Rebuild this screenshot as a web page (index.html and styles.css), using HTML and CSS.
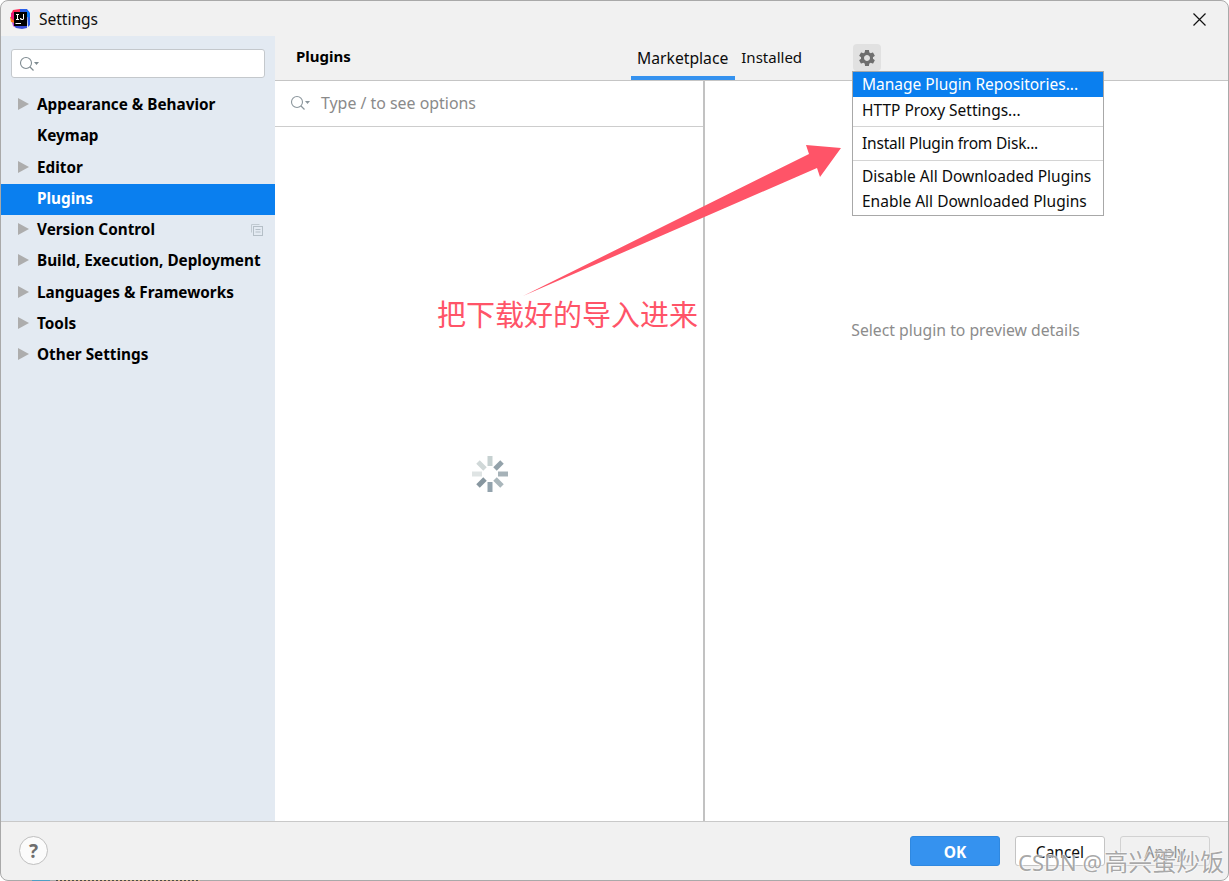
FILE: index.html
```html
<!DOCTYPE html>
<html lang="en">
<head>
<meta charset="utf-8">
<title>Settings</title>
<link rel="stylesheet" href="styles.css">
</head>
<body>
<div class="window">
  <header class="titlebar">
    <svg class="logo" viewBox="0 0 20 20" width="20" height="20">
      <path d="M3 1 L10 0 L11 3 L4 4 L1 5 Z" fill="#fe2857"/>
      <path d="M0 8 L4 7 L4 14 L1 13 Z" fill="#fe7a1a"/>
      <path d="M1 4 L4 3 L4 12 L1 9 Z" fill="#ee1a78"/>
      <path d="M10 0 L17 0 L20 4 L20 16 L18 18 L17 3 L10 3 Z" fill="#2b5de8"/>
      <path d="M15 0 L19 3 L20 8 L17 8 L17 3 Z" fill="#087cfa"/>
      <path d="M4 17 L17 17 L17 19 L12 20 L6 19 Z" fill="#3a4fd8"/>
      <path d="M2 13 L4 14 L4 17 L6 19 L3 17 Z" fill="#b43bd0"/>
      <rect x="4" y="3" width="13" height="14" fill="#000"/>
      <rect x="5.5" y="14" width="5.5" height="1" fill="#fff"/>
      <path d="M6 5h3v1h-1v4h1v1h-3v-1h1v-4h-1z M13 5h1v5l-1 1h-2l-1-1v-1h1l1 1h1z" fill="#fff"/>
    </svg>
    <span class="title-text">Settings</span>
    <svg class="close" viewBox="0 0 13 13" width="13" height="13">
      <path d="M0.5 0.5L12.5 12.5M12.5 0.5L0.5 12.5" stroke="#111" stroke-width="1.2" fill="none"/>
    </svg>
  </header>

  <div class="body-row">
    <aside class="sidebar">
      <div class="side-search">
        <svg class="search-icon" viewBox="0 0 20 16" width="20" height="16">
          <circle cx="7" cy="7" r="5.5" fill="none" stroke="#7f8b91" stroke-width="1.1"/>
          <path d="M11 11L14.5 14.5" stroke="#7f8b91" stroke-width="1.3"/>
          <path d="M15 6h5l-2.5 3z" fill="#7f8b91"/>
        </svg>
      </div>
      <nav class="tree">
        <div class="tree-row"><i class="arrow"></i>Appearance &amp; Behavior</div>
        <div class="tree-row">Keymap</div>
        <div class="tree-row"><i class="arrow"></i>Editor</div>
        <div class="tree-row selected">Plugins</div>
        <div class="tree-row"><i class="arrow"></i>Version Control
          <svg class="copy-icon" viewBox="0 0 12 12" width="12" height="12">
            <path d="M0.5 8.5V0.5H8.5" fill="none" stroke="#c1cad1"/>
            <rect x="2.5" y="2.5" width="9" height="9" fill="none" stroke="#b5bfc7"/>
            <path d="M4.5 5.5h5M4.5 8h5" stroke="#b5bfc7"/>
          </svg>
        </div>
        <div class="tree-row"><i class="arrow"></i>Build, Execution, Deployment</div>
        <div class="tree-row"><i class="arrow"></i>Languages &amp; Frameworks</div>
        <div class="tree-row"><i class="arrow"></i>Tools</div>
        <div class="tree-row"><i class="arrow"></i>Other Settings</div>
      </nav>
    </aside>

    <main class="content">
      <div class="content-head">
        <h1 class="head-title">Plugins</h1>
        <div class="tabs">
          <div class="tab active">Marketplace</div>
          <div class="tab tab-narrow">Installed</div>
        </div>
        <div class="gear-btn">
          <svg viewBox="0 0 24 24" width="20" height="20"><path fill="#6e6e6e" d="M19.14 12.94c.04-.3.06-.61.06-.94 0-.32-.02-.64-.07-.94l2.03-1.58c.18-.14.23-.41.12-.61l-1.92-3.32c-.12-.22-.37-.29-.59-.22l-2.39.96c-.5-.38-1.03-.7-1.62-.94l-.36-2.54c-.04-.24-.24-.41-.48-.41h-3.84c-.24 0-.43.17-.47.41l-.36 2.54c-.59.24-1.13.57-1.62.94l-2.39-.96c-.22-.08-.47 0-.59.22L2.74 8.87c-.12.21-.08.47.12.61l2.03 1.58c-.05.3-.09.63-.09.94s.02.64.07.94l-2.03 1.58c-.18.14-.23.41-.12.61l1.92 3.32c.12.22.37.29.59.22l2.39-.96c.5.38 1.03.7 1.62.94l.36 2.54c.05.24.24.41.48.41h3.84c.24 0 .44-.17.47-.41l.36-2.54c.59-.24 1.13-.56 1.62-.94l2.39.96c.22.08.47 0 .59-.22l1.92-3.32c.12-.22.07-.47-.12-.61l-2.01-1.58zM12 15.6c-1.98 0-3.6-1.62-3.6-3.6s1.62-3.6 3.6-3.6 3.6 1.62 3.6 3.6-1.62 3.6-3.6 3.6z"/></svg>
        </div>
      </div>
      <div class="panes">
        <section class="list-pane">
          <div class="list-search">
            <svg class="search-icon" viewBox="0 0 20 16" width="20" height="16">
              <circle cx="7" cy="7" r="5.5" fill="none" stroke="#8b969c" stroke-width="1.1"/>
              <path d="M11 11L14.5 14.5" stroke="#8b969c" stroke-width="1.3"/>
              <path d="M15 6h5l-2.5 3z" fill="#8b969c"/>
            </svg>
            <span class="placeholder">Type / to see options</span>
          </div>
          <div class="list-body">
            <svg viewBox="-18 -18 36 36" width="36" height="36">
              <g stroke-width="5" fill="none">
                <path d="M0 -18V-8" stroke="#c6d1d1"/>
                <path d="M12 -12L5 -5" stroke="#93a2aa"/>
                <path d="M18 0H8" stroke="#a6b2b8"/>
                <path d="M12 12L5 5" stroke="#a9b6bb"/>
                <path d="M0 18V8" stroke="#93a3ad"/>
                <path d="M-12 12L-5 5" stroke="#87969f"/>
                <path d="M-18 0H-8" stroke="#dfe4e4"/>
                <path d="M-12 -12L-5 -5" stroke="#d0d8d8"/>
              </g>
            </svg>
          </div>
        </section>
        <section class="detail-pane">Select plugin to preview details</section>
      </div>
    </main>
  </div>

  <footer class="footer">
    <div class="help">?</div>
    <div class="buttons">
      <div class="btn primary">OK</div>
      <div class="btn">Cancel</div>
      <div class="btn disabled">Apply</div>
    </div>
  </footer>

  <div class="menu">
    <div class="menu-item active">Manage Plugin Repositories...</div>
    <div class="menu-item">HTTP Proxy Settings...</div>
    <div class="menu-sep"></div>
    <div class="menu-item menu-tight">Install Plugin from Disk...</div>
    <div class="menu-sep menu-sep-low"></div>
    <div class="menu-item">Disable All Downloaded Plugins</div>
    <div class="menu-item">Enable All Downloaded Plugins</div>
  </div>

  <svg class="annot-arrow" viewBox="0 0 1229 881" width="1229" height="881">
    <polygon points="523,296 809,154 806,145 841,148 820,177 817,168" fill="#ff5468"/>
  </svg>
  <div class="annot-text">把下载好的导入进来</div>
  <div class="watermark">CSDN @<span class="watermark-cjk">高兴蛋炒饭</span></div>
</div>
<div class="behind-blue"></div>
<div class="behind-text"></div>
</body>
</html>
```
FILE: styles.css
```css
* { box-sizing: border-box; }
html, body { margin: 0; padding: 0; background: #fff; }
body {
  position: relative;
  width: 1229px;
  height: 881px;
  overflow: hidden;
  font-family: "Noto Sans", "Noto Sans CJK SC", sans-serif;
  font-size: 15.5px;
  color: #0c0c0c;
}
.window {
  position: relative;
  width: 1229px;
  height: 881px;
  display: flex;
  flex-direction: column;
  background: #f1f1f1;
  border: 1px solid #a9a9a9;
  border-radius: 8px;
  overflow: hidden;
}
.behind-blue {
  position: absolute;
  left: 32px;
  top: 880px;
  width: 18px;
  height: 1px;
  background: #4f9fc4;
}
.behind-text {
  position: absolute;
  left: 56px;
  top: 880px;
  width: 144px;
  height: 1px;
  background: repeating-linear-gradient(90deg, #4a4a4a 0 2px, #d9b98a 2px 4px);
}
.titlebar {
  height: 35px;
  flex: none;
  display: flex;
  align-items: center;
  padding: 1px 22px 0 9px;
}
.logo { flex: none; }
.title-text { margin-left: 9px; font-size: 15.5px; color: #111; }
.close { margin-left: auto; }
.body-row { flex: 1; display: flex; min-height: 0; }
.sidebar { width: 274px; flex: none; background: #e3eaf2; }
.side-search {
  margin: 13px 10px 0;
  height: 29px;
  background: #fff;
  border: 1px solid #c4c8cc;
  border-radius: 3px;
  display: flex;
  align-items: center;
  padding-left: 7px;
}
.tree { margin-top: 12px; }
.tree-row {
  position: relative;
  height: 31.25px;
  display: flex;
  align-items: center;
  padding: 0 0 3px 36px;
  font-size: 15.3px;
  font-weight: 700;
  color: #000;
}
.tree-row.selected { background: #0a7fef; color: #fff; }
.arrow {
  position: absolute;
  left: 17px;
  top: 8px;
  border-left: 11px solid #adadad;
  border-top: 6px solid transparent;
  border-bottom: 6px solid transparent;
}
.copy-icon { position: absolute; left: 250px; top: 9px; }
.content { flex: 1; min-width: 0; display: flex; flex-direction: column; }
.content-head {
  height: 45px;
  flex: none;
  display: flex;
  border-bottom: 1px solid #c5c5c5;
  position: relative;
}
.head-title {
  margin: 0;
  padding: 10px 0 0 21px;
  width: 356px;
  font-size: 15px;
  font-weight: 700;
  color: #000;
}
.tabs { display: flex; height: 44px; }
.tab { padding: 11px 6px 0; }
.tab-narrow { font-size: 15px; }
.tab.active { border-bottom: 4px solid #3592ef; font-size: 15.7px; padding-right: 7px; }
.gear-btn {
  position: absolute;
  left: 578px;
  top: 8px;
  width: 28px;
  height: 27px;
  border-radius: 4px;
  background: #e1e1e1;
  display: flex;
  align-items: center;
  justify-content: center;
}
.panes { flex: 1; display: flex; min-height: 0; background: #fff; }
.list-pane {
  width: 430px;
  flex: none;
  display: flex;
  flex-direction: column;
  border-right: 2px solid #c2c2c2;
}
.list-search {
  height: 46px;
  flex: none;
  display: flex;
  align-items: center;
  padding: 0 0 1px 15px;
  border-bottom: 1px solid #cdcdcd;
}
.placeholder { margin-left: 11px; color: #8a8a8a; font-size: 15.9px; }
.list-body {
  flex: 1;
  display: flex;
  align-items: center;
  justify-content: center;
  padding-left: 2px;
}
.detail-pane {
  flex: 1;
  text-align: center;
  padding: 238px 2px 0 0;
  color: #8c8c8c;
  font-size: 15.75px;
}
.footer {
  height: 59px;
  flex: none;
  display: flex;
  align-items: flex-start;
  justify-content: space-between;
  border-top: 1px solid #c9c9c9;
  padding: 14px 18px 0;
}
.help {
  width: 29px;
  height: 29px;
  border-radius: 50%;
  background: #fbfbfb;
  border: 1px solid #bfbfbf;
  color: #6e6e6e;
  font-size: 19px;
  font-weight: 700;
  display: flex;
  align-items: center;
  justify-content: center;
}
.buttons { display: flex; gap: 15px; }
.btn {
  width: 90px;
  height: 30px;
  border-radius: 3px;
  background: #fff;
  border: 1px solid #c4c4c4;
  padding-top: 2px;
  display: flex;
  align-items: center;
  justify-content: center;
}
.btn.primary { background: #3592ef; border-color: #2f88e0; color: #fff; font-weight: 700; padding-top: 1px; }
.btn.disabled { background: transparent; border-color: #d2d2d2; color: #8c8c8c; }
.menu {
  position: absolute;
  left: 851px;
  top: 70px;
  width: 252px;
  background: #fff;
  border: 1px solid #a8a8a8;
  padding-bottom: 2px;
}
.menu-item {
  height: 25px;
  line-height: 26px;
  padding-left: 9px;
  white-space: nowrap;
}
.menu-item.active { background: #0a7fef; color: #fff; line-height: 24px; }
.menu-tight { letter-spacing: -0.2px; }
.menu-sep { height: 1px; margin: 4px 0 3px; background: #d4d4d4; }
.menu-sep-low { margin: 5px 0 2px; }
.annot-arrow { position: absolute; left: -1px; top: -1px; pointer-events: none; }
.annot-text {
  position: absolute;
  left: 436px;
  top: 290px;
  font-size: 29px;
  line-height: 44px;
  color: #ff5468;
  white-space: nowrap;
  font-family: "Noto Sans CJK SC", sans-serif;
}
.watermark {
  position: absolute;
  left: 1017px;
  top: 846px;
  font-size: 22px;
  line-height: 30px;
  color: rgba(130, 130, 130, 0.7);
  text-shadow: 0 0 2px #fff, 0 0 2px #fff;
  white-space: nowrap;
  font-family: "Noto Sans", "Noto Sans CJK SC", sans-serif;
}
.watermark-cjk { font-size: 24px; margin-left: 2px; }
```
